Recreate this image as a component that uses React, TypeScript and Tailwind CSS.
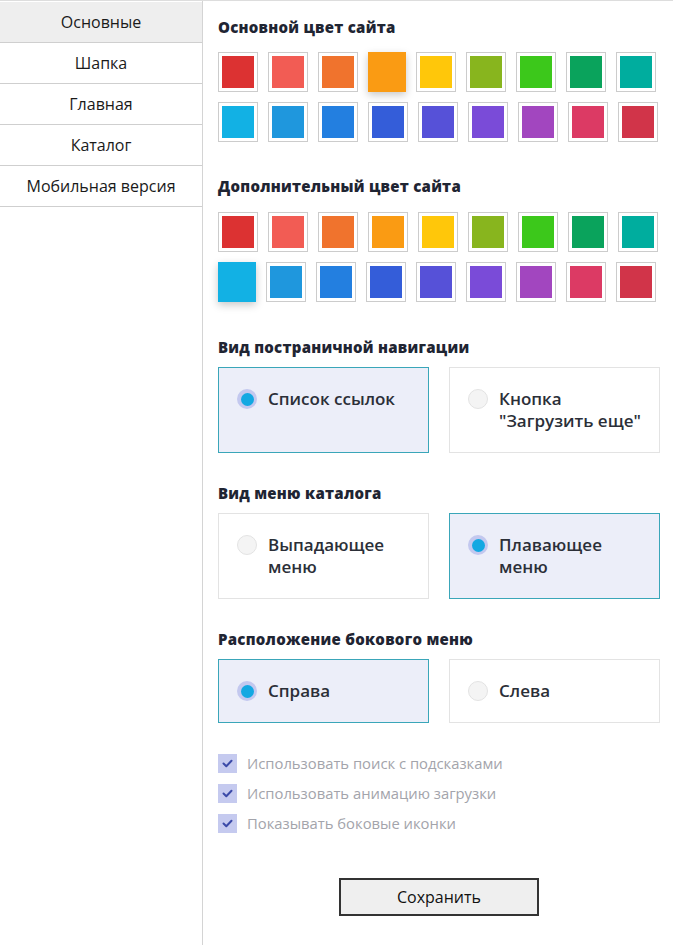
import React from "react";

const row1 = ["#dc3232", "#f25c54", "#f0732d", "#fa9b13", "#ffc70a", "#88b51e", "#3cc81b", "#0aa35c", "#00ad9e"];
const row2 = ["#12b1e4", "#1f97dd", "#237fe0", "#345dd9", "#5651d8", "#7a4bd8", "#a246bf", "#dc3a64", "#d13449"];

function Swatch({ color, selected }: { color: string; selected?: boolean }) {
  if (selected) {
    return (
      <div
        className="w-[38px] h-[40px] shrink-0 shadow-[0_3px_8px_rgba(0,0,0,0.22)]"
        style={{ backgroundColor: color }}
      />
    );
  }
  return (
    <div className="w-[40px] h-[40px] shrink-0 border border-[#cccccc] p-[3px] bg-white">
      <div className="w-full h-full" style={{ backgroundColor: color }} />
    </div>
  );
}

function Palette({ sel }: { sel: [number, number] }) {
  return (
    <div className="flex flex-col gap-[10px]">
      {[row1, row2].map((r, ri) => (
        <div key={ri} className="flex gap-[10px]">
          {r.map((c, ci) => (
            <Swatch key={ci} color={c} selected={sel[0] === ri && sel[1] === ci} />
          ))}
        </div>
      ))}
    </div>
  );
}

function Heading({ children }: { children: React.ReactNode }) {
  return (
    <div className="text-[15px] leading-[20px] font-extrabold text-[#1f2533] tracking-[0.25px]">{children}</div>
  );
}

function Card({ lines, selected }: { lines: string[]; selected?: boolean }) {
  return (
    <div
      className={
        "flex-1 flex items-start gap-[11px] px-[18px] py-[20px] border " +
        (selected ? "bg-[#eceef9] border-[#3aa6b9]" : "bg-white border-[#e3e3e3]")
      }
    >
      <div className="pt-[1px] shrink-0">
        {selected ? (
          <div className="w-[20px] h-[20px] rounded-full bg-[#c3c8ef] flex items-center justify-center">
            <div className="w-[13px] h-[13px] rounded-full bg-[#13a8e2]" />
          </div>
        ) : (
          <div className="w-[20px] h-[20px] rounded-full bg-[#f4f4f4] border border-[#e3e3e3]" />
        )}
      </div>
      <div className="text-[17px] leading-[22px] font-semibold text-[#2b2f38]">
        {lines.map((l, i) => (
          <div key={i}>{l}</div>
        ))}
      </div>
    </div>
  );
}

function Check({ label }: { label: string }) {
  return (
    <div className="flex items-center gap-[10px] h-[20px]">
      <div className="w-[19px] h-[19px] bg-[#c5caef] flex items-center justify-center">
        <svg width="11" height="9" viewBox="0 0 11 9" fill="none">
          <path d="M1.5 4.5 L4.3 7.2 L9.5 1.8" stroke="#3b4aa8" strokeWidth="2" strokeLinecap="round" strokeLinejoin="round" />
        </svg>
      </div>
      <div className="text-[14.8px] text-[#a3a4ab] leading-[20px]">{label}</div>
    </div>
  );
}

export default function App() {
  const menu = ["Основные", "Шапка", "Главная", "Каталог", "Мобильная версия"];
  return (
    <div
      className="flex w-[673px] h-[945px] bg-white border-t border-[#dddddd]"
      style={{ fontFamily: "'Open Sans', 'Noto Sans', sans-serif" }}
    >
      <div className="w-[203px] shrink-0 border-r border-[#d4d4d4] pt-[1px]">
        {menu.map((m, i) => (
          <div
            key={m}
            className={
              "h-[41px] flex items-center justify-center border-b border-[#cfcfcf] text-[16px] text-[#1a1a1a] " +
              (i === 0 ? "bg-[#eeeeee]" : "bg-white")
            }
          >
            {m}
          </div>
        ))}
      </div>
      <div className="flex-1 pl-[15px] pr-[13px] pt-[16px]">
        <Heading>Основной цвет сайта</Heading>
        <div className="mt-[15px]">
          <Palette sel={[0, 3]} />
        </div>
        <div className="mt-[34px]">
          <Heading>Дополнительный цвет сайта</Heading>
        </div>
        <div className="mt-[16px]">
          <Palette sel={[1, 0]} />
        </div>
        <div className="mt-[35px]">
          <Heading>Вид постраничной навигации</Heading>
        </div>
        <div className="mt-[10px] flex gap-[20px]">
          <Card lines={["Список ссылок"]} selected />
          <Card lines={["Кнопка", "\"Загрузить еще\""]} />
        </div>
        <div className="mt-[30px]">
          <Heading>Вид меню каталога</Heading>
        </div>
        <div className="mt-[10px] flex gap-[20px]">
          <Card lines={["Выпадающее", "меню"]} />
          <Card lines={["Плавающее", "меню"]} selected />
        </div>
        <div className="mt-[30px]">
          <Heading>Расположение бокового меню</Heading>
        </div>
        <div className="mt-[10px] flex gap-[20px]">
          <Card lines={["Справа"]} selected />
          <Card lines={["Слева"]} />
        </div>
        <div className="mt-[30px] flex flex-col gap-[10px]">
          <Check label="Использовать поиск с подсказками" />
          <Check label="Использовать анимацию загрузки" />
          <Check label="Показывать боковые иконки" />
        </div>
        <div className="mt-[45px] flex justify-center">
          <button className="w-[200px] h-[38px] border-2 border-[#333333] bg-[#efefef] text-[16px] text-[#111111]">
            Сохранить
          </button>
        </div>
      </div>
    </div>
  );
}
